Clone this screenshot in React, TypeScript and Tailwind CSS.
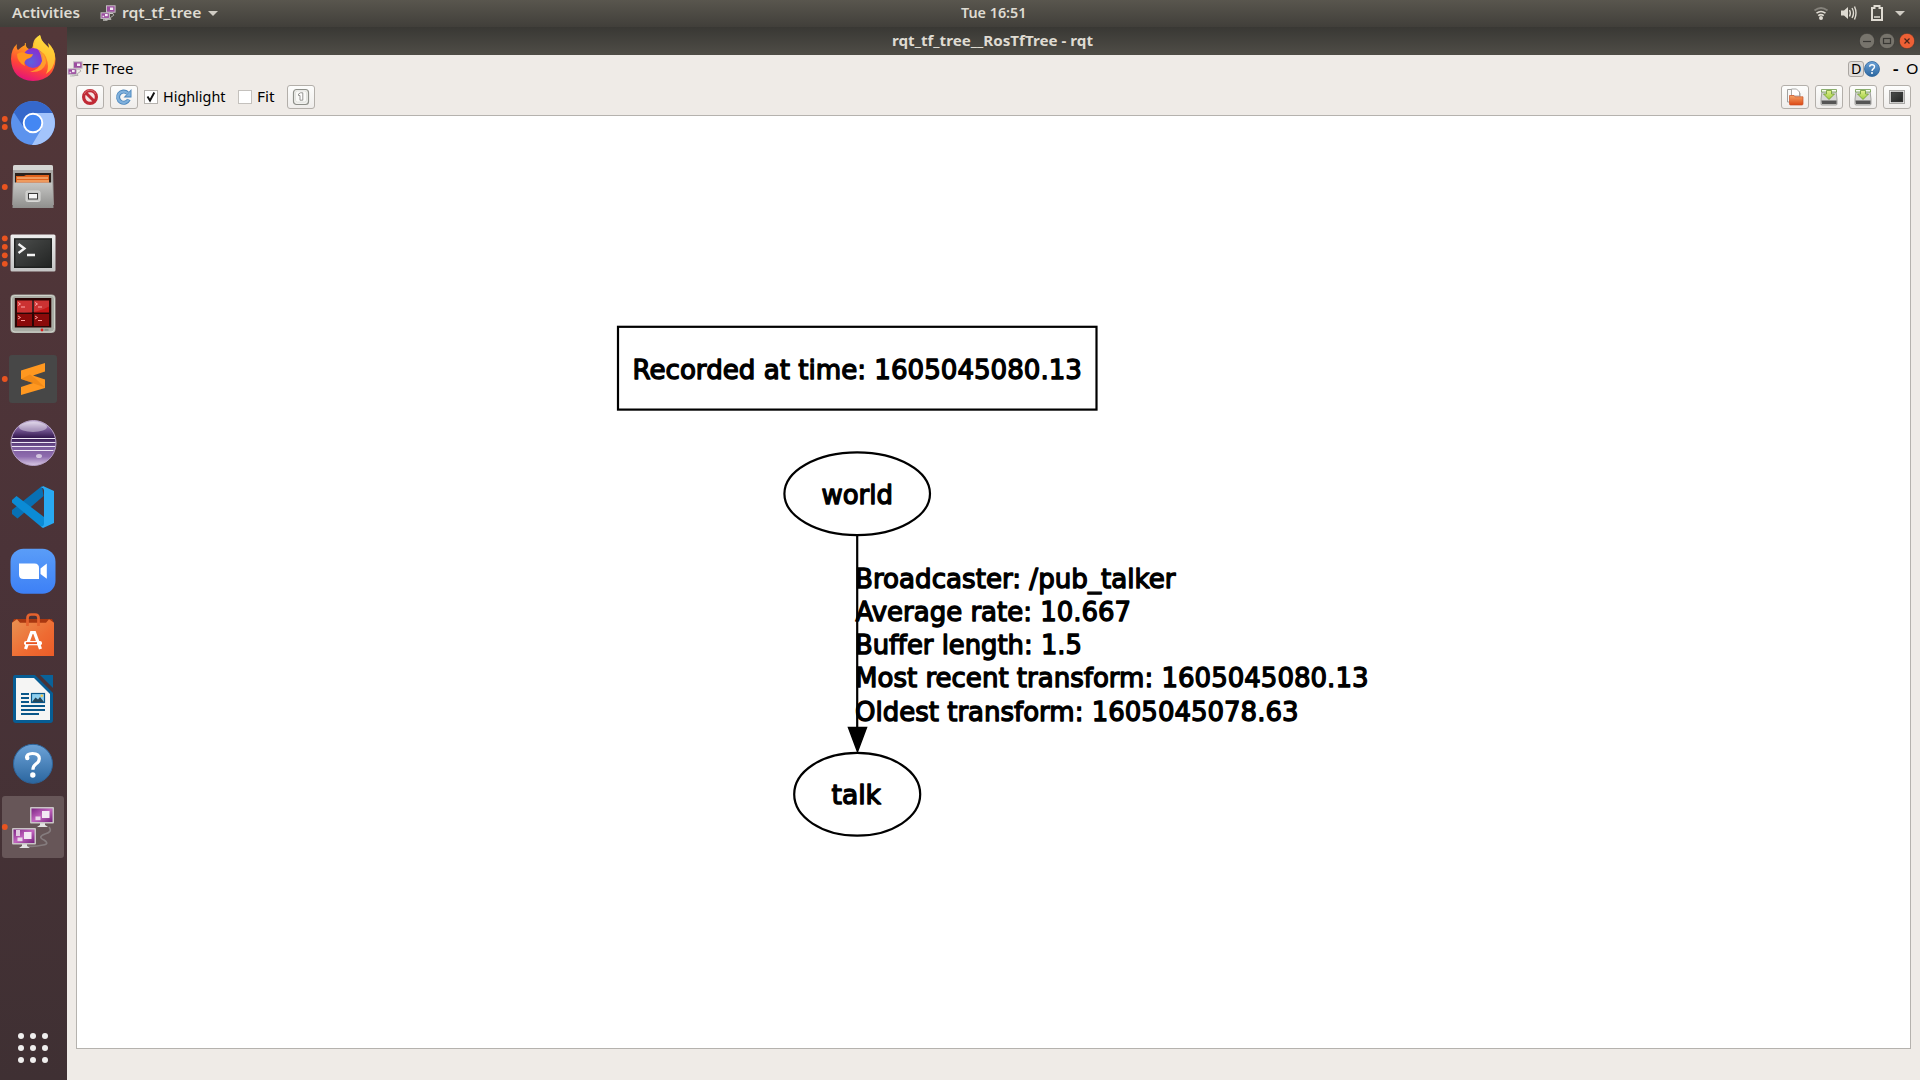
import React from "react";

type LauncherProps = { y: number; dots?: number[]; active?: boolean; children: React.ReactNode };

function Defs() {
  return (
    <svg width="0" height="0" className="absolute">
      <defs>
        <linearGradient id="ffBody" x1="0.7" y1="0" x2="0.35" y2="1">
          <stop offset="0" stopColor="#fff44f" />
          <stop offset="0.35" stopColor="#ff9a1f" />
          <stop offset="0.7" stopColor="#ff4438" />
          <stop offset="1" stopColor="#e3127c" />
        </linearGradient>
        <radialGradient id="ffGlobe" cx="0.4" cy="0.7" r="0.7">
          <stop offset="0" stopColor="#5b62dd" />
          <stop offset="1" stopColor="#8a2bd0" />
        </radialGradient>
        <linearGradient id="steel" x1="0" y1="0" x2="0" y2="1">
          <stop offset="0" stopColor="#c6c6c4" />
          <stop offset="1" stopColor="#8f8f8d" />
        </linearGradient>
        <linearGradient id="frame" x1="0" y1="0" x2="0" y2="1">
          <stop offset="0" stopColor="#ededed" />
          <stop offset="1" stopColor="#c4c4c4" />
        </linearGradient>
        <linearGradient id="darkScreen" x1="0" y1="0" x2="1" y2="1">
          <stop offset="0" stopColor="#4b4d4c" />
          <stop offset="1" stopColor="#232524" />
        </linearGradient>
        <linearGradient id="eclipse" x1="0" y1="0" x2="0" y2="1">
          <stop offset="0" stopColor="#d9cde6" />
          <stop offset="0.18" stopColor="#7d5f9c" />
          <stop offset="0.38" stopColor="#35194f" />
          <stop offset="0.6" stopColor="#7a5a9b" />
          <stop offset="0.8" stopColor="#8e6cae" />
          <stop offset="1" stopColor="#d8c9e4" />
        </linearGradient>
        <linearGradient id="zoomBg" x1="0" y1="0" x2="0" y2="1">
          <stop offset="0" stopColor="#5a9df8" />
          <stop offset="1" stopColor="#3d80f6" />
        </linearGradient>
        <linearGradient id="bag" x1="0" y1="0" x2="1" y2="1">
          <stop offset="0" stopColor="#e99252" />
          <stop offset="0.6" stopColor="#ee6b32" />
          <stop offset="1" stopColor="#ea5c28" />
        </linearGradient>
        <linearGradient id="helpBlue" x1="0" y1="0" x2="0" y2="1">
          <stop offset="0" stopColor="#6da3d8" />
          <stop offset="1" stopColor="#2b669f" />
        </linearGradient>
        <linearGradient id="purple" x1="0" y1="0" x2="1" y2="1">
          <stop offset="0" stopColor="#7c2583" />
          <stop offset="0.5" stopColor="#c264bf" />
          <stop offset="1" stopColor="#73207a" />
        </linearGradient>
        <linearGradient id="folder" x1="0" y1="0" x2="0" y2="1">
          <stop offset="0" stopColor="#f4a468" />
          <stop offset="1" stopColor="#dd4814" />
        </linearGradient>
        <linearGradient id="arrowGreen" x1="0" y1="0" x2="0" y2="1">
          <stop offset="0" stopColor="#e2f08f" />
          <stop offset="1" stopColor="#9ccc3c" />
        </linearGradient>
      </defs>
    </svg>
  );
}

function Launcher({ y, dots = [], active, children }: LauncherProps) {
  return (
    <svg className="block h-16 w-[67px] shrink-0" viewBox={`0 ${y - 32} 67 64`}>
      {active && <rect x="2" y={y - 31} width="62" height="62" rx="3" fill="#675658" />}
      {children}
      {dots.map((d) => (
        <circle key={d} cx="4.8" cy={d} r="2.9" fill="#e95420" />
      ))}
    </svg>
  );
}

function Monitors() {
  return (
    <>
      <path d="M49 827Q53 832 45 834Q37 837 44 840Q50 844 43 845Q34 847 27 846" fill="none" stroke="#857c7e" strokeWidth="1.600" />
      {[
        [30, 807],
        [12, 828],
      ].map(([x, y]) => (
        <g key={x}>
          <path d={`M${x + 10} ${y + 16}h5v2l3 2h-11l3-2z`} fill="#e3e3e3" />
          <rect x={x} y={y} width="24" height="16.5" rx="1" fill="#c9c5c6" />
          <rect x={x + 1.5} y={y + 1.5} width="21" height="13.5" fill="url(#purple)" />
          <rect x={x + 12} y={y + 4} width="7.5" height="7" fill="#f3e8f3" />
          <rect x={x + 5.5} y={y + 9.500} width="5" height="3.700" fill="#e9d7e9" />
        </g>
      ))}
      <rect x="16" y="830" width="4" height="6" fill="#e0c8e0" />
    </>
  );
}

function MiniMonitors({ className }: { className: string }) {
  return (
    <svg className={className} viewBox="0 0 16 16">
      <path d="M13 8.500q2 2-1 3t-1 3H5" fill="none" stroke="#b0adab" strokeWidth="1" />
      <rect x="6.500" y=".8" width="8.600" height="6.400" fill="#9c4da0" stroke="#c5bfc4" />
      <rect x="10" y="2.500" width="3.200" height="2.500" fill="#f6ecf6" />
      <path d="M9 8.500h4" stroke="#c9c7c5" />
      <rect x="1" y="7.800" width="8.400" height="5.600" fill="#9c4da0" stroke="#c5bfc4" />
      <rect x="5" y="9" width="2.700" height="2.200" fill="#f6ecf6" />
      <rect x="2.500" y="10.700" width="1.700" height="1.500" fill="#ead4ea" />
      <path d="M3 15h4.500" stroke="#c9c7c5" strokeWidth="1.400" />
    </svg>
  );
}

function Dock() {
  return (
    <aside className="flex w-[67px] shrink-0 flex-col bg-linear-to-b from-[#533739] via-[#4b3338] to-[#3f3033]">
      <Launcher y={59}>
        <path
          d="M17 44 Q16 48 18 50 Q21 47 25 45 Q24 43 26 43 Q25 47 29 49 Q33 50 33 44 Q34 38 40 35 Q41 40 44 43 L49 48 Q49 45 48 43 Q55 49 55.500 59 Q55 80 33 81 Q12 80 11 59 Q11 49 17 44Z"
          fill="url(#ffBody)"
        />
        <path d="M40 35Q41 40 44 43L49 48Q49 45 48 43Q55 49 55 58Q54 69 46 74Q50 67 46 57Q43 50 34 50Q32 44 40 35Z" fill="#ffd53a" opacity=".75" />
        <circle cx="33" cy="58" r="10" fill="url(#ffGlobe)" />
        <path d="M17 54Q21 51 25 53Q29 55 33 54Q32 58 27 59Q23 62 25 66Q17 62 17 54Z" fill="#ff9520" />
        <path d="M38 50Q46 54 46 63Q43 73 30 72Q40 69 42 61Q41 53 38 50Z" fill="#ffa62b" opacity=".85" />
      </Launcher>
      <Launcher y={123} dots={[119, 127]}>
        <circle cx="33" cy="123" r="22" fill="#5c93ee" />
        <path d="M33 101A22 22 0 0 1 52.500 113H33L23.500 127L13.800 112.300A22 22 0 0 1 33 101Z" fill="#3568cb" />
        <path d="M52.500 113H33L42 128L32 145A22 22 0 0 0 52.500 113Z" fill="#a3c4fb" />
        <circle cx="33" cy="123" r="9.300" fill="#4487f3" stroke="#fff" strokeWidth="1.900" />
      </Launcher>
      <Launcher y={187} dots={[187]}>
        <path d="M13 167q0-2 2-2h36q2 0 2 2l.8 38H12.300z" fill="#a9a9a7" />
        <path d="M13 167q0-2 2-2h36q2 0 2 2v3H13z" fill="#d5d5d3" />
        <rect x="15" y="173" width="36" height="11" fill="#2c211b" />
        <path d="M16 176h8l2-1h23v9H16z" fill="#e0621c" />
        <path d="M17 178h31M17 181h32" stroke="#fbd2a0" strokeWidth="1.200" />
        <path d="M14 182.500h38l1.500 25.500h-41z" fill="url(#steel)" />
        <rect x="26" y="191" width="14" height="10.500" rx="1.500" fill="#c9c9c7" stroke="#d9d9d7" />
        <rect x="28.500" y="193.500" width="9" height="5.500" fill="#f6f6f6" stroke="#3b3b3b" />
      </Launcher>
      <Launcher y={251} dots={[238.3, 246.800, 255.300, 263.800]}>
        <rect x="10.500" y="234.500" width="45" height="37" rx="1.500" fill="url(#frame)" />
        <rect x="14" y="238.200" width="38" height="29.800" fill="#1f2120" />
        <rect x="15.500" y="239.700" width="35" height="26.800" fill="url(#darkScreen)" />
        <path d="M18.500 244l6 4.500-6 4.500M27 255h8" fill="none" stroke="#f4f4f4" strokeWidth="2.300" />
      </Launcher>
      <Launcher y={315}>
        <rect x="10.500" y="294.500" width="45" height="38.500" rx="4" fill="#a9aca4" />
        <rect x="11.500" y="295.500" width="43" height="36.500" rx="3.500" fill="none" stroke="#d0d3cb" />
        <rect x="14.800" y="298" width="36.500" height="29.500" fill="#2a0505" />
        {[17, 34].map((x) =>
          [300.500, 314].map((y) => (
            <g key={`${x}-${y}`}>
              <rect x={x} y={y} width="15" height="12" fill={y < 310 ? "#c51616" : "#8a0a0a"} />
              <path d={`M${x + 1} ${y + 2}l2.500 1.500-2.500 1.500M${x + 4} ${y + 6.500}h4`} fill="none" stroke="#ff9c9c" strokeWidth="1" />
            </g>
          )),
        )}
        <path d="M17 300.500h32v6q-14 8-32 6z" fill="#fff" opacity=".12" />
        <circle cx="42" cy="330" r="1.400" fill="#e11c1c" />
        <rect x="44.500" y="328.800" width="4" height="2" fill="#888b84" />
      </Launcher>
      <Launcher y={379} dots={[379]}>
        <rect x="9" y="355" width="48" height="48" rx="3" fill="#474747" />
        <path d="M21 370.500L45 363v8.500L33 375.400L45 379.500V388L21 395v-8l12-4-12-4z" fill="#ff9820" />
        <path d="M21 379l24 8.500-9-8.500-6-4.500z" fill="#e07a10" opacity=".45" />
      </Launcher>
      <Launcher y={443}>
        <circle cx="33.500" cy="443" r="22.500" fill="url(#eclipse)" stroke="#b7a2c9" strokeWidth="1" />
        <ellipse cx="33" cy="427" rx="14" ry="5" fill="#fff" opacity=".4" />
        <path d="M12 438.500h43M11.500 442.500h44M12 446.500h43M13.500 450.500h40" stroke="#eee7f5" strokeWidth="1.200" />
        <ellipse cx="39" cy="456" rx="3" ry="2" fill="#fff" opacity=".6" />
      </Launcher>
      <Launcher y={507}>
        <path d="M42 486l1.500 10-26 22.500-5.500-4.500v-4z" fill="#0870b4" />
        <path d="M12 500l4.500-4L44 517v9l-2 1.500-30-25z" fill="#0b8bd5" />
        <path d="M43 486l11 5v32l-11 5-2-1.500q3 0 3-3V490q-1-3-3-2z" fill="#29a9f2" />
      </Launcher>
      <Launcher y={571}>
        <rect x="10.500" y="548.700" width="45" height="45" rx="13" fill="url(#zoomBg)" />
        <path d="M19 563.500h15.500q4.500 0 4.500 4.500v11H23.500q-4.500 0-4.500-4.500z" fill="#fff" />
        <path d="M40.500 568.500l6.300-5v15.200l-6.300-4.700z" fill="#fff" />
      </Launcher>
      <Launcher y={635}>
        <path d="M14 619h38l2 4H12z" fill="#a93710" />
        <path d="M12 622.800l5-3.500 3 3.500h26l3-3.500 5 3.500V656H12z" fill="url(#bag)" />
        <path d="M27.500 626v-8q0-3.500 3.500-3.500h4q3.500 0 3.500 3.500v8" fill="none" stroke="#e4622e" strokeWidth="2.700" />
        <path d="M25.500 649l6-16.500h3l6 16.500" fill="none" stroke="#fff" strokeWidth="3.200" />
        <rect x="24" y="641" width="18" height="4.300" rx="2" fill="#fff" />
        <rect x="26" y="642.200" width="11" height="1.900" fill="#e95420" />
      </Launcher>
      <Launcher y={699}>
        <path d="M15 675h20l18 18v27q0 3-3 3H16q-3 0-3-3v-42q0-3 2-3z" fill="#075d94" />
        <path d="M40 675h13v13z" fill="#0a6299" />
        <path d="M16 678h18l16 16v26H16z" fill="#f5f5f4" />
        <path d="M21 694h8M21 698h8M21 702h8M21 706h24M21 710h24M21 714h18" stroke="#09578a" strokeWidth="2" />
        <rect x="31.500" y="693.500" width="13" height="9" fill="#8fd0ef" stroke="#09578a" strokeWidth="1.200" />
        <path d="M32 702l3.500-4.500 2.500 2 2-2.500 4 5z" fill="#24465a" />
        <circle cx="41.800" cy="695.700" r="1.300" fill="#f5c94a" />
      </Launcher>
      <Launcher y={763}>
        <circle cx="33" cy="763.800" r="19.500" fill="url(#helpBlue)" stroke="#2d659c" />
        <path d="M26.500 758q0-4.500 6-4.500 6.800 0 6.800 5.200 0 3-3.400 5.300-3 2.200-3 5.800" fill="none" stroke="#fff" strokeWidth="3.200" />
        <circle cx="27.300" cy="758" r="2.200" fill="#fff" />
        <circle cx="32.800" cy="775" r="2.700" fill="#fff" />
      </Launcher>
      <Launcher y={827} dots={[827]} active>
        <Monitors />
      </Launcher>
      <div className="mt-auto mb-[17px] ml-[18px] grid w-[30px] grid-cols-3 gap-[6px]">
        {Array.from({ length: 9 }, (_, i) => (
          <span key={i} className="size-[6px] rounded-full bg-[#f0efee]" />
        ))}
      </div>
    </aside>
  );
}

/* A label set to an exact width, so that proportions stay stable between fonts. */
function Fit({ text, w, size = 14.5, color = "#dfdbd2", weight = 700 }: { text: string; w: number; size?: number; color?: string; weight?: number }) {
  return (
    <svg className="block h-5 overflow-visible" width={w} viewBox={`0 0 ${w} 20`}>
      <text x="0" y="15" textLength={w} lengthAdjust="spacingAndGlyphs" fontSize={size} fontWeight={weight} fill={color} fontFamily='"Noto Sans", sans-serif'>
        {text}
      </text>
    </svg>
  );
}

function TopBar() {
  return (
    <header className="flex h-[27px] shrink-0 items-center bg-linear-to-b from-[#59564e] to-[#413f3a]">
      <div className="flex w-[940px] items-center pb-px pl-3">
        <Fit text="Activities" w={68} weight={600} />
        <MiniMonitors className="ml-[20px] size-4" />
        <span className="ml-[6px] flex">
          <Fit text="rqt_tf_tree" w={79.500} weight={600} />
        </span>
        <span className="ml-[6px] h-0 w-0 border-x-[5px] border-t-[5px] border-x-transparent border-t-[#d0ccc4]" />
      </div>
      <div className="ml-[21px] flex pb-px">
        <Fit text="Tue 16:51" w={65.500} weight={600} />
      </div>
      <svg className="ml-auto h-[27px] w-[110px]" viewBox="1810 0 110 27" fill="none">
        <path d="M1814.500 10.500q6.500-5 13 0" stroke="#85827b" strokeWidth="1.900" />
        <path d="M1816.500 13.200q4.500-3.500 9 0M1818.200 15.600q2.800-1.900 5.600 0" stroke="#dfdbd2" strokeWidth="1.600" />
        <circle cx="1821" cy="18" r="2" fill="#dfdbd2" />
        <path d="M1841 10.500h3l4-3.500v12l-4-3.500h-3z" fill="#dfdbd2" />
        <path d="M1849.500 10q1.700 3.200 0 6.500M1852 8q3 5 0 10M1854.500 6.500q3 6.500 0 13" stroke="#dfdbd2" strokeWidth="1.400" />
        <path d="M1872 8h2.500V6h5v2h2.500v12h-10z" stroke="#dfdbd2" strokeWidth="2" />
        <path d="M1874 17h6" stroke="#dfdbd2" strokeWidth="1.500" />
        <path d="M1895 11h10l-5 5z" fill="#d0ccc4" />
      </svg>
    </header>
  );
}

function TitleBar() {
  return (
    <div className="flex h-7 shrink-0 items-center bg-linear-to-b from-[#393834] to-[#4f4d47]">
      <div className="ml-[825px]">
        <Fit text="rqt_tf_tree__RosTfTree - rqt" w={201} />
      </div>
      <div className="mr-[5px] ml-auto flex gap-1">
        <svg className="size-4" viewBox="0 0 16 16">
          <circle cx="8" cy="8" r="7.700" fill="#77746c" stroke="#34332f" strokeWidth=".6" />
          <path d="M4 8.500h8" stroke="#393834" strokeWidth="1.200" />
        </svg>
        <svg className="size-4" viewBox="0 0 16 16">
          <circle cx="8" cy="8" r="7.700" fill="#77746c" stroke="#34332f" strokeWidth=".6" />
          <rect x="4.500" y="5.500" width="7" height="5" fill="none" stroke="#393834" strokeWidth="1.200" />
        </svg>
        <svg className="size-4" viewBox="0 0 16 16">
          <circle cx="8" cy="8" r="7.700" fill="#ee6035" stroke="#34332f" strokeWidth=".6" />
          <path d="M5.500 5.500l5 5m0-5l-5 5" stroke="#4a251a" strokeWidth="1.200" />
        </svg>
      </div>
    </div>
  );
}

function ToolButton({ children }: { children: React.ReactNode }) {
  return (
    <button className="flex h-6 w-7 items-center justify-center rounded-[3px] border border-[#b3afaa] bg-linear-to-b from-[#fdfdfc] to-[#efedeb]">
      <svg className="size-[18px] shrink-0" viewBox="0 0 18 18" fill="none">
        {children}
      </svg>
    </button>
  );
}

function SaveIcon() {
  return (
    <>
      <path d="M2 3h14l1 8v5q0 1-1 1H2q-1 0-1-1v-5z" fill="#d7d7d5" stroke="#8f8f8d" strokeWidth=".8" />
      <path d="M1.500 12.500h15V16H2z" fill="#555" />
      <path d="M1.500 1.500h15V4h-15z" fill="#f7fbef" stroke="#6f9a4b" strokeWidth=".8" />
      <path d="M6.500 2.500h5V6h3L9 11.500 3.500 6h3z" fill="url(#arrowGreen)" stroke="#6c9a30" strokeWidth=".8" />
    </>
  );
}

function Toolbar() {
  return (
    <div className="mt-[2px] flex h-6 items-center px-[9px]">
      <ToolButton>
        <circle cx="9" cy="9" r="6.400" fill="#f6e4e2" stroke="#c02a35" strokeWidth="3.200" />
        <path d="M5 5l8 8" stroke="#c02a35" strokeWidth="3" />
        <path d="M3 6q2-4 6-4t6 4" stroke="#e0787a" strokeWidth=".8" />
      </ToolButton>
      <div className="ml-[6px] flex">
        <ToolButton>
          <path d="M13.800 11.500A5.600 5.600 0 1 1 12.500 5" stroke="#4a86bd" strokeWidth="4" />
          <path d="M16.500 1v8.500H8.500z" fill="#4a86bd" />
          <path d="M13.500 11.700A5.600 5.600 0 1 1 12.500 5.200" stroke="#7fb0dc" strokeWidth="2.300" />
          <path d="M15.600 3v5.500h-5z" fill="#7fb0dc" />
        </ToolButton>
      </div>
      <span className="ml-[6px] flex size-[14px] items-center justify-center border border-[#b5b2ae] bg-white">
        <svg className="size-3" viewBox="0 0 12 12">
          <path d="M2.500 5.500l2.500 4L9.300 1.500" fill="none" stroke="#111" strokeWidth="1.900" />
        </svg>
      </span>
      <span className="ml-[5px]">
        <Fit text="Highlight" w={62.500} size={15} weight={400} color="#000" />
      </span>
      <span className="ml-[12.500px] size-[14px] border border-[#c4c1bd] bg-white" />
      <span className="ml-[5px]">
        <Fit text="Fit" w={17.500} size={15} weight={400} color="#000" />
      </span>
      <div className="ml-[12.500px] flex">
        <ToolButton>
          <rect x="1.500" y="1.500" width="15" height="15" rx="3" fill="#f1f1ee" stroke="#8d8f89" strokeWidth="1.200" />
          <rect x="3.500" y="3" width="11" height="11" rx="2" fill="#fafaf8" stroke="#dcddd9" strokeWidth=".8" />
          <path d="M6.500 6l2-1.200h2.300v7.400H8V7.500H6.500z" fill="#fff" stroke="#8b8b88" strokeWidth=".9" />
        </ToolButton>
      </div>
      <div className="ml-auto flex gap-[6px]">
        <ToolButton>
          <path d="M1.500 14V1.500h5l1.500 2h5l1 2V14z" fill="#f8f8f7" stroke="#a1a19f" />
          <path d="M5.500 1h5l3 3V8h-8z" fill="#fff" stroke="#a1a19f" strokeWidth=".9" />
          <path d="M3.500 7.500H8l1 1.300h8V16q0 1-1 1H4.500q-1 0-1-1z" fill="url(#folder)" stroke="#c8512a" strokeWidth=".7" />
        </ToolButton>
        <ToolButton>
          <SaveIcon />
        </ToolButton>
        <ToolButton>
          <SaveIcon />
        </ToolButton>
        <ToolButton>
          <rect x="1.500" y="2.500" width="15" height="13" fill="#f4f4f3" stroke="#aaa9a7" />
          <rect x="3.200" y="4.200" width="11.600" height="9.600" fill="url(#darkScreen)" stroke="#222" strokeWidth=".8" />
        </ToolButton>
      </div>
    </div>
  );
}

const graphTexts: [string, number, number, number][] = [
  ["Recorded at time: 1605045080.13", 632.5, 378.600, 449.5],
  ["world", 821.500, 503.500, 71.5],
  ["Broadcaster: /pub_talker", 855, 587.500, 320.500],
  ["Average rate: 10.667", 855.500, 620.700, 275.500],
  ["Buffer length: 1.5", 855, 654, 227],
  ["Most recent transform: 1605045080.13", 855, 687.200, 513.500],
  ["Oldest transform: 1605045078.63", 855, 720.600, 443.500],
  ["talk", 831.500, 804.300, 49.500],
];

function Graph() {
  return (
    <svg className="block size-full" viewBox="77 116 1833 932">
      <g fill="none" stroke="#000" strokeWidth="2.200">
        <rect x="618" y="326.800" width="478.500" height="82.800" />
        <ellipse cx="857.200" cy="493.700" rx="72.800" ry="41.400" />
        <ellipse cx="857.200" cy="794.300" rx="63" ry="41.400" />
        <path d="M857.200 535V728" />
      </g>
      <path d="M848.500 727.500h18l-9 24z" stroke="#000" strokeWidth="1.500" />
      <g fontFamily='"DejaVu Sans", sans-serif' fontSize="27.300" stroke="#000" strokeWidth="1.400" strokeLinejoin="round">
        {graphTexts.map(([t, x, y, w]) => (
          <text key={t} x={x} y={y} textLength={w} lengthAdjust="spacingAndGlyphs">
            {t}
          </text>
        ))}
      </g>
    </svg>
  );
}

function DockWidgetTitle() {
  return (
    <div className="flex h-7 items-center">
      <MiniMonitors className="size-4" />
      <Fit text="TF Tree" w={50.500} size={15} weight={400} color="#000" />
      <div className="mr-[2px] ml-auto flex items-center">
        <span className="flex size-4 items-center justify-center rounded-[3px] border border-[#aaa6a2] bg-[#e2dedb]">
          <Fit text="D" w={10.500} weight={400} color="#000" />
        </span>
        <svg className="size-4" viewBox="0 0 16 16">
          <circle cx="8" cy="8" r="7.500" fill="url(#helpBlue)" stroke="#2d659c" strokeWidth=".8" />
          <path d="M5.700 5.800q0-2 2.300-2 2.500 0 2.500 2 0 1.200-1.300 2Q8 8.600 8 10" fill="none" stroke="#fff" strokeWidth="1.400" />
          <circle cx="8" cy="12" r="1" fill="#fff" />
        </svg>
        <span className="ml-[13px]">
          <Fit text="-" w={5.500} weight={700} color="#000" />
        </span>
        <span className="ml-[7px]">
          <Fit text="O" w={12.500} size={15} weight={400} color="#000" />
        </span>
      </div>
    </div>
  );
}

export default function App() {
  return (
    <div className="flex h-[1080px] w-[1920px] flex-col overflow-hidden bg-[#efebe7]">
      <Defs />
      <TopBar />
      <div className="flex min-h-0 flex-1">
        <Dock />
        <main className="flex min-w-0 flex-1 flex-col">
          <TitleBar />
          <DockWidgetTitle />
          <Toolbar />
          <div className="mx-[9px] mt-[6px] h-[934px] border border-[#b5b2ae] bg-white">
            <Graph />
          </div>
        </main>
      </div>
    </div>
  );
}
